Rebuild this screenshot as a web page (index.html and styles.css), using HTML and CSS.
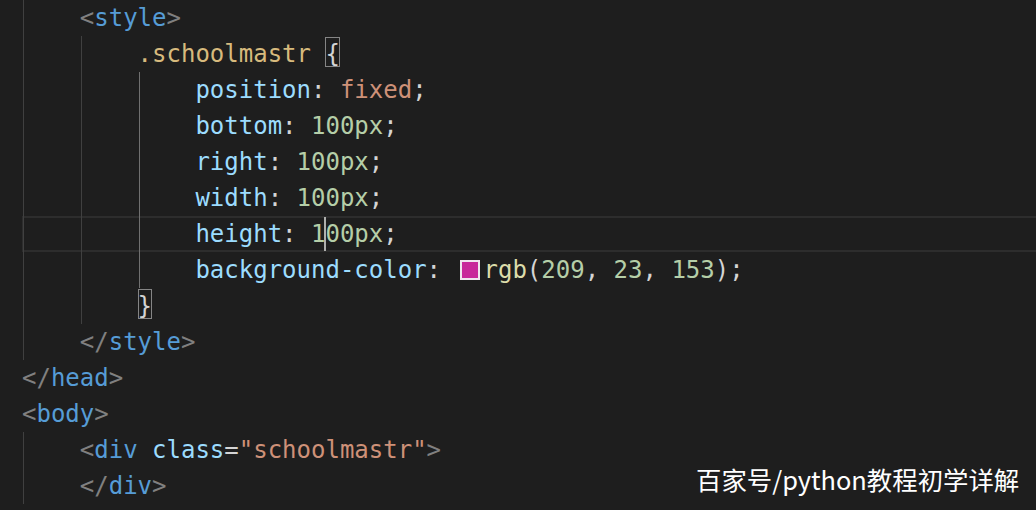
FILE: index.html
```html
<!DOCTYPE html>
<html lang="zh-CN">
<head>
<meta charset="utf-8">
<title>schoolmastr</title>
<link rel="stylesheet" href="styles.css">
</head>
<body>
<div class="editor">
  <div class="line"><span class="ind"></span><span class="p">&lt;</span><span class="tag">style</span><span class="p">&gt;</span></div>
  <div class="line"><span class="ind"></span><span class="ind"></span><span class="sel">.schoolmastr</span> <span class="br">{</span></div>
  <div class="line"><span class="ind"></span><span class="ind"></span><span class="ind act"></span><span class="prop">position</span><span class="pu">: </span><span class="str">fixed</span><span class="pu">;</span></div>
  <div class="line"><span class="ind"></span><span class="ind"></span><span class="ind act"></span><span class="prop">bottom</span><span class="pu">: </span><span class="num">100px</span><span class="pu">;</span></div>
  <div class="line"><span class="ind"></span><span class="ind"></span><span class="ind act"></span><span class="prop">right</span><span class="pu">: </span><span class="num">100px</span><span class="pu">;</span></div>
  <div class="line"><span class="ind"></span><span class="ind"></span><span class="ind act"></span><span class="prop">width</span><span class="pu">: </span><span class="num">100px</span><span class="pu">;</span></div>
  <div class="line current"><span class="ind"></span><span class="ind"></span><span class="ind act"></span><span class="prop">height</span><span class="pu">: </span><span class="num">1<span class="cursor"></span>00px</span><span class="pu">;</span></div>
  <div class="line"><span class="ind"></span><span class="ind"></span><span class="ind act"></span><span class="prop">background-color</span><span class="pu">: </span><span class="swatch"></span><span class="fn">rgb</span><span class="pu">(</span><span class="num">209</span><span class="pu">, </span><span class="num">23</span><span class="pu">, </span><span class="num">153</span><span class="pu">);</span></div>
  <div class="line"><span class="ind"></span><span class="ind"></span><span class="br">}</span></div>
  <div class="line"><span class="ind"></span><span class="p">&lt;/</span><span class="tag">style</span><span class="p">&gt;</span></div>
  <div class="line"><span class="p">&lt;/</span><span class="tag">head</span><span class="p">&gt;</span></div>
  <div class="line"><span class="p">&lt;</span><span class="tag">body</span><span class="p">&gt;</span></div>
  <div class="line"><span class="ind"></span><span class="p">&lt;</span><span class="tag">div</span> <span class="attr">class</span><span class="pu">=</span><span class="str">"schoolmastr"</span><span class="p">&gt;</span></div>
  <div class="line"><span class="ind"></span><span class="p">&lt;/</span><span class="tag">div</span><span class="p">&gt;</span></div>
</div>
<div class="watermark">百家号/python教程初学详解</div>
</body>
</html>
```

FILE: styles.css
```css
html, body {
  margin: 0;
  padding: 0;
  background: #1e1e1e;
  width: 1036px;
  height: 510px;
  overflow: hidden;
}

.editor {
  padding-left: 22px;
  font-family: "DejaVu Sans Mono", "Liberation Mono", monospace;
  font-size: 24px;
  line-height: 36px;
  color: #d4d4d4;
}

.line {
  height: 36px;
  white-space: pre;
}

.line.current {
  box-shadow: inset 0 2px 0 #2d2d2d, inset 0 -2px 0 #2d2d2d, inset 2px 0 0 #2d2d2d;
}

.ind {
  display: inline-block;
  width: 4ch;
  height: 36px;
  vertical-align: top;
  background-image: linear-gradient(#404040, #404040);
  background-size: 1px 100%;
  background-position: 1px 0;
  background-repeat: no-repeat;
}

.ind.act {
  background-image: linear-gradient(#707070, #707070);
}

.p { color: #808080; }
.tag { color: #569cd6; }
.sel { color: #d7ba7d; }
.prop { color: #9cdcfe; }
.attr { color: #9cdcfe; }
.pu { color: #d4d4d4; }
.str { color: #ce9178; }
.num { color: #b5cea8; }
.fn { color: #dcdcaa; }

.br {
  position: relative;
  color: #d4d4d4;
}

.br::after {
  content: "";
  position: absolute;
  left: 0;
  right: 0;
  top: -3px;
  height: 30px;
  border: 1px solid #858585;
  box-sizing: border-box;
}

.cursor {
  position: relative;
}

.cursor::before {
  content: "";
  position: absolute;
  left: -1px;
  top: -3px;
  width: 2px;
  height: 34px;
  background: #aeafad;
}

.swatch {
  display: inline-block;
  width: 20px;
  height: 20px;
  margin: 0 3px 0 5px;
  box-sizing: border-box;
  border: 2px solid #efe6ef;
  background: rgb(200, 40, 155);
  vertical-align: -2px;
}

.watermark {
  position: absolute;
  left: 696px;
  top: 466px;
  font-family: "Noto Sans CJK SC", "Noto Sans", sans-serif;
  font-size: 25.4px;
  line-height: 26px;
  color: #ffffff;
  white-space: nowrap;
}
```
